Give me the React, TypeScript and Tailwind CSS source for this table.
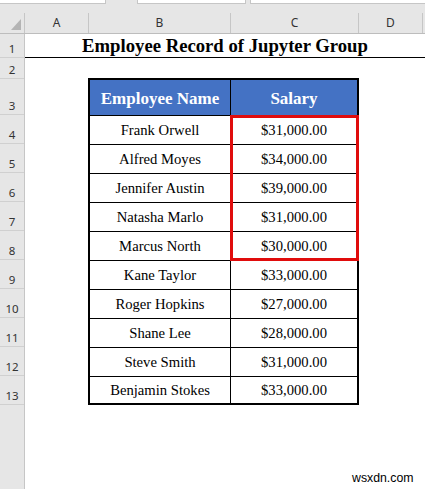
import React from "react";

const names = [
  "Frank Orwell",
  "Alfred Moyes",
  "Jennifer Austin",
  "Natasha Marlo",
  "Marcus North",
  "Kane Taylor",
  "Roger Hopkins",
  "Shane Lee",
  "Steve Smith",
  "Benjamin Stokes",
];
const salaries = [
  "$31,000.00",
  "$34,000.00",
  "$39,000.00",
  "$31,000.00",
  "$30,000.00",
  "$33,000.00",
  "$27,000.00",
  "$28,000.00",
  "$31,000.00",
  "$33,000.00",
];

const rowHeights: [string, string][] = [
  ["1", "h-[24px]"],
  ["2", "h-[21px]"],
  ["3", "h-[36px]"],
  ["4", "h-[29px]"],
  ["5", "h-[29px]"],
  ["6", "h-[29px]"],
  ["7", "h-[29px]"],
  ["8", "h-[29px]"],
  ["9", "h-[29px]"],
  ["10", "h-[29px]"],
  ["11", "h-[29px]"],
  ["12", "h-[29px]"],
  ["13", "h-[29px]"],
];

export default function App() {
  const serif = { fontFamily: '"Liberation Serif", "Times New Roman", serif' };
  const ui = { fontFamily: '"Noto Sans", "Open Sans", sans-serif' };
  return (
    <div className="relative w-[425px] h-[489px] overflow-hidden bg-white flex flex-col">
      {/* top strip */}
      <div className="h-[13px] bg-[#e6e6e6] flex items-start shrink-0">
        <div className="w-[106px] h-[4px] bg-white border-r border-b border-[#c6c6c6]" />
        <div className="w-[31px]" />
        <div className="w-[109px] h-[4px] bg-white border-l border-r border-b border-[#c6c6c6]" />
        <div className="w-[4px]" />
        <div className="flex-1 h-[4px] bg-white border-l border-b border-[#c6c6c6]" />
      </div>
      {/* column headers */}
      <div
        className="h-[21px] bg-[#e6e6e6] flex border-b border-[#bdbdbd] text-[12px] text-[#333] shrink-0"
        style={ui}
      >
        <div className="w-[25px] border-r border-[#c6c6c6] flex items-end justify-end pr-[3px] pb-[3px]">
          <svg width="10" height="11" viewBox="0 0 10 11">
            <polygon points="10,0 10,11 0,11" fill="#b4b4b4" />
          </svg>
        </div>
        <div className="w-[64px] border-r border-[#c6c6c6] flex items-center justify-center">A</div>
        <div className="w-[142px] border-r border-[#c6c6c6] flex items-center justify-center">B</div>
        <div className="w-[128px] border-r border-[#c6c6c6] flex items-center justify-center">C</div>
        <div className="w-[64px] border-r border-[#c6c6c6] flex items-center justify-center">D</div>
        <div className="flex-1" />
      </div>
      {/* body */}
      <div className="flex flex-1">
        <div
          className="w-[25px] bg-[#e6e6e6] border-r border-[#c6c6c6] flex flex-col text-[11.5px] text-[#333]"
          style={ui}
        >
          {rowHeights.map(([n, h]) => (
            <div
              key={n}
              className={`${h} border-b border-[#d0d0d0] flex items-end justify-center pb-[1px] leading-[15px]`}
            >
              {n}
            </div>
          ))}
          <div className="flex-1" />
        </div>
        <div className="flex-1 flex flex-col">
          <div
            className="h-[24px] border-b border-black flex items-center justify-center text-[18.7px] font-bold text-black pt-[1px]"
            style={serif}
          >
            Employee Record of Jupyter Group
          </div>
          <div className="mt-[20px] ml-[63px] w-[271px] border-2 border-black relative" style={serif}>
            <div className="h-[35px] bg-[#4472c4] flex text-white font-bold text-[17px]">
              <div className="w-[141px] border-r border-black flex items-center justify-center pt-[3px]">
                Employee Name
              </div>
              <div className="flex-1 flex items-center justify-center pt-[3px]">Salary</div>
            </div>
            {names.map((n, i) => (
              <div
                key={n}
                className={`${i === names.length - 1 ? "h-[27px]" : "h-[29px]"} border-t border-black flex text-[14.67px] text-black`}
              >
                <div className="w-[141px] border-r border-black flex items-center justify-center">{n}</div>
                <div className="flex-1 flex items-center justify-center">{salaries[i]}</div>
              </div>
            ))}
            <div className="absolute left-[140px] top-[35px] w-[129px] h-[146px] border-[3px] border-[#e00c0c]" />
          </div>
        </div>
      </div>
      <div
        className="absolute left-[352px] top-[470px] text-[12.3px] text-black leading-[16px]"
        style={{ fontFamily: '"Liberation Sans", Arial, sans-serif' }}
      >
        wsxdn.com
      </div>
    </div>
  );
}
